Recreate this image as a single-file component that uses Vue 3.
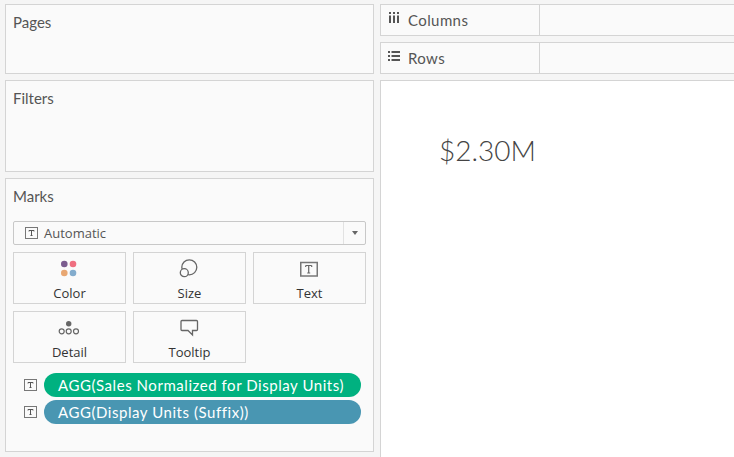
<script setup>
const cards = [
  { label: 'Color', icon: 'color' },
  { label: 'Size', icon: 'size' },
  { label: 'Text', icon: 'text' },
  { label: 'Detail', icon: 'detail' },
  { label: 'Tooltip', icon: 'tooltip' },
]
const pills = [
  { label: 'AGG(Sales Normalized for Display Units)', color: '#00b180' },
  { label: 'AGG(Display Units (Suffix))', color: '#4996b2' },
]
</script>

<template>
  <div class="page">
    <div class="left">
      <section class="panel pages"><h2>Pages</h2></section>
      <section class="panel filters"><h2>Filters</h2></section>
      <section class="panel marks">
        <h2>Marks</h2>
        <div class="select">
          <svg class="t-small" width="13" height="12" viewBox="0 0 13 12">
            <rect x="0.5" y="0.5" width="12" height="11" fill="none" stroke="#777" />
            <path d="M4 3.5h5M6.5 3.5v5M5.5 8.5h2M4 3.5v1M9 3.5v1" fill="none" stroke="#555" />
          </svg>
          <span class="select-label">Automatic</span>
          <span class="arrow-cell"><span class="arrow"></span></span>
        </div>
        <div class="cards">
          <div v-for="c in cards" :key="c.label" class="card">
            <svg class="card-icon" width="25" height="20" viewBox="0 0 25 20">
              <g v-if="c.icon === 'color'">
                <circle cx="7.3" cy="4" r="3.3" fill="#7b5c8f" />
                <circle cx="16" cy="4" r="3.3" fill="#ef6f80" />
                <circle cx="7.3" cy="13" r="3.3" fill="#e8a772" />
                <circle cx="16" cy="13" r="3.3" fill="#83accd" />
              </g>
              <g v-else-if="c.icon === 'size'" fill="none" stroke="#666" stroke-width="1.3">
                <circle cx="12.3" cy="7.3" r="7.5" />
                <circle cx="7.3" cy="12.7" r="4" fill="#fafafa" />
              </g>
              <g v-else-if="c.icon === 'text'">
                <rect x="3.75" y="2.5" width="16.5" height="13.5" fill="none" stroke="#777" stroke-width="1.5" />
                <path d="M8.7 5.5h6M11.7 5.500v7.500M10.200 13h3M8.700 5.500v1.500M14.700 5.500v1.500" fill="none" stroke="#666" stroke-width="1.2" />
              </g>
              <g v-else-if="c.icon === 'detail'">
                <circle cx="11.700" cy="4.700" r="2.700" fill="#666" />
                <g fill="none" stroke="#666" stroke-width="1.2">
                  <circle cx="4.700" cy="12.300" r="2.500" />
                  <circle cx="11.700" cy="12.300" r="2.500" />
                  <circle cx="19" cy="12.300" r="2.500" />
                </g>
              </g>
              <path
                v-else
                d="M5 1.500h14.500a1 1 0 0 1 1 1v8a1 1 0 0 1-1 1h-4v4.500l-4.500-4.500H5a1 1 0 0 1-1-1v-8a1 1 0 0 1 1-1z"
                fill="none"
                stroke="#666"
                stroke-width="1.3"
              />
            </svg>
            <span class="card-label">{{ c.label }}</span>
          </div>
        </div>
        <div class="pills">
          <div v-for="p in pills" :key="p.label" class="pill-row">
            <svg class="t-small" width="13" height="12" viewBox="0 0 13 12">
              <rect x="0.500" y="0.500" width="12" height="11" fill="none" stroke="#777" />
              <path d="M4 3.500h5M6.500 3.500v5M5.500 8.500h2M4 3.500v1M9 3.500v1" fill="none" stroke="#555" />
            </svg>
            <div class="pill" :style="{ background: p.color }">{{ p.label }}</div>
          </div>
        </div>
      </section>
    </div>
    <div class="right">
      <div class="shelf">
        <div class="shelf-label">
          <svg class="shelf-icon" width="12" height="12" viewBox="0 0 12 12">
            <path d="M1 0h2v2H1zM1 3.500h2V11H1zM5 0h2v2H5zM5 3.500h2V11H5zM9 0h2v2H9zM9 3.500h2V11H9z" fill="#555" />
          </svg>
          <span>Columns</span>
        </div>
      </div>
      <div class="shelf">
        <div class="shelf-label">
          <svg class="shelf-icon" width="12" height="12" viewBox="0 0 12 12">
            <path d="M0 1h2v2H0zM3.500 1H12v2H3.500zM0 5h2v2H0zM3.500 5H12v2H3.500zM0 9h2v2H0zM3.500 9H12v2H3.500z" fill="#555" />
          </svg>
          <span>Rows</span>
        </div>
      </div>
      <div class="view">
        <div class="value">$2.30M</div>
      </div>
    </div>
  </div>
</template>

<style>
html, body { margin: 0; overflow: hidden; background: #f5f5f5; }
</style>

<style scoped>
.page {
  width: 734px;
  height: 457px;
  box-sizing: border-box;
  padding: 4px 0 0 5px;
  display: flex;
  gap: 6px;
  background: #f5f5f5;
  font-family: "Open Sans", Lato, sans-serif;
  color: #333;
  overflow: hidden;
}
.left {
  width: 369px;
  display: flex;
  flex-direction: column;
  gap: 6px;
  flex: none;
}
.panel {
  box-sizing: border-box;
  background: #fafafa;
  border: 1px solid #d4d4d4;
  padding: 8px 7px 0;
}
.panel h2 {
  margin: 0;
  font-family: Lato, sans-serif;
  font-size: 15px;
  line-height: 18px;
  font-weight: 400;
  color: #555;
}
.pages { height: 70px; }
.filters { height: 92px; }
.marks { height: 274px; }
.select {
  margin-top: 16px;
  height: 24px;
  box-sizing: border-box;
  border: 1px solid #c8c8c8;
  border-radius: 2px;
  background: #fafafa;
  display: flex;
  align-items: center;
  padding-left: 11px;
}
.select-label {
  margin-left: 6px;
  font-size: 13px;
  color: #555;
  flex: 1;
}
.arrow-cell {
  width: 21px;
  height: 100%;
  border-left: 1px solid #e2e2e2;
  display: flex;
  align-items: center;
  justify-content: center;
}
.arrow {
  width: 0;
  height: 0;
  border-left: 3.500px solid transparent;
  border-right: 3.500px solid transparent;
  border-top: 4px solid #666;
}
.cards {
  margin-top: 7px;
  display: grid;
  grid-template-columns: repeat(3, 113px);
  grid-auto-rows: 52px;
  gap: 7px;
}
.card {
  box-sizing: border-box;
  border: 1px solid #d4d4d4;
  display: flex;
  flex-direction: column;
  align-items: center;
  padding-top: 7px;
}
.card-icon { display: block; overflow: visible; }
.card-label {
  margin-top: 5px;
  font-size: 13px;
  line-height: 16px;
  color: #333;
}
.pills {
  margin-top: 10px;
  padding-left: 11px;
  display: flex;
  flex-direction: column;
  gap: 3px;
}
.pill-row {
  display: flex;
  align-items: center;
  gap: 7px;
}
.t-small { flex: none; display: block; }
.pill {
  width: 317px;
  height: 24px;
  box-sizing: border-box;
  border-radius: 12px;
  padding-left: 14px;
  color: #fff;
  font-family: Lato, sans-serif;
  font-size: 15px;
  letter-spacing: 0.55px;
  line-height: 24px;
  white-space: nowrap;
}
.right {
  width: 354px;
  flex: none;
  display: flex;
  flex-direction: column;
  gap: 6px;
}
.shelf {
  height: 32px;
  box-sizing: border-box;
  background: #fafafa;
  border: 1px solid #d4d4d4;
  border-right: 0;
}
.shelf-label {
  width: 159px;
  height: 100%;
  box-sizing: border-box;
  border-right: 1px solid #d4d4d4;
  display: flex;
  align-items: center;
  padding-left: 7px;
  gap: 8px;
  font-family: Lato, sans-serif;
  font-size: 15px;
  letter-spacing: 0.4px;
  color: #555;
}
.shelf-icon { flex: none; margin-top: -4px; }
.view {
  flex: 1;
  background: #fff;
  border-top: 1px solid #d4d4d4;
  border-left: 1px solid #d4d4d4;
  box-sizing: border-box;
  padding: 51px 0 0 58px;
}
.value {
  font-family: Lato, sans-serif;
  font-size: 28px;
  line-height: 36px;
  font-weight: 300;
  color: #444;
}
</style>
